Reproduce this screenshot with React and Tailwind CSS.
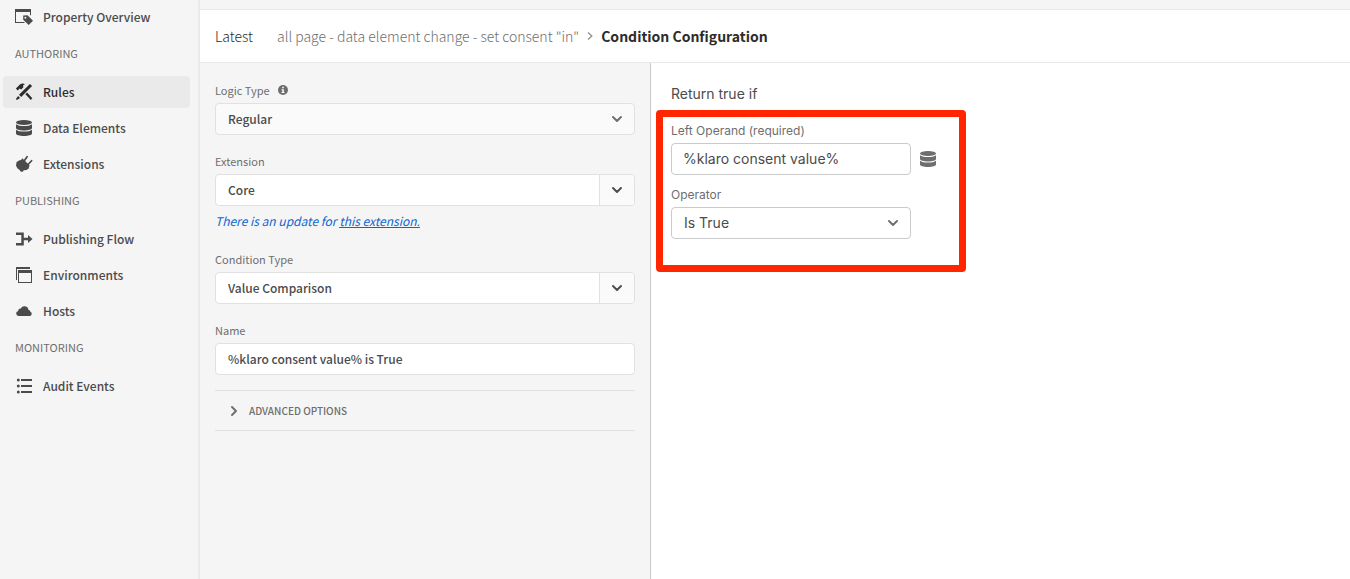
import { useState } from "react";

const iconClass = "size-[18px] shrink-0";

function PropertyIcon() {
  return (
    <svg className={iconClass} viewBox="0 0 18 18" fill="currentColor" aria-hidden="true">
      <path d="M0 1h16v6.500l-1-.5V4H1v10h8l1 1H0z" />
      <path d="M8.200 7.500l4.300-.3L18 12.700 13.700 17 8.200 11.800z" />
      <circle cx="10.400" cy="9.700" r="1" fill="#f5f5f5" />
    </svg>
  );
}

function RulesIcon() {
  return (
    <svg className={iconClass} viewBox="0 0 18 18" fill="currentColor" aria-hidden="true">
      <path d="M.9 5.400L5.200 1.200C7 .2 9 .5 9.900 1.200L8 2.600l.4 1.700-2.200 2.200-1.500-1-2 2z" />
      <path d="M10.400 11.200l1.700-1.700 5.200 5.800-1.500 1.600z" />
      <path d="M14.900.9l2.200 2.200L6.200 14 4 11.800z" />
      <path d="M3.100 12.900l2 2-3.200 2.100-1-1z" />
    </svg>
  );
}

function DataIcon() {
  return (
    <svg className={iconClass} viewBox="0 0 18 18" fill="currentColor" aria-hidden="true">
      <ellipse cx="9" cy="3.500" rx="8" ry="2.500" />
      <path d="M1 5.200c1.600 1.300 4.600 1.900 8 1.900s6.400-.6 8-1.900v3.700c0 1.400-3.600 2.500-8 2.500s-8-1.100-8-2.500z" />
      <path d="M1 10.700c1.600 1.300 4.600 1.900 8 1.900s6.400-.6 8-1.900v3.700c0 1.400-3.600 2.500-8 2.500s-8-1.100-8-2.500z" />
    </svg>
  );
}

function PlugIcon() {
  return (
    <svg className={iconClass} viewBox="0 0 18 18" fill="currentColor" aria-hidden="true">
      <path d="M7.300 3.200l7.200 7-.8 3.200-2.200 1.600-2.600.3-1.600 1.600-2-.6L4.700 15 2.300 13.200 1 10.400 1.600 7l3-1.800 1.500-.1z" />
      <path d="M9.300 5.700l2.800-4M13.300 9.300l3.300-3.600" stroke="currentColor" strokeWidth="1.700" strokeLinecap="round" />
    </svg>
  );
}

function FlowIcon() {
  return (
    <svg className={iconClass} viewBox="0 0 18 18" fill="currentColor" aria-hidden="true">
      <path d="M1 2.500h7.800v5.300H13V5l4.500 4L13 13v-2.800H8.800v5.300H1V13h5.300V5H1z" />
    </svg>
  );
}

function EnvironmentIcon() {
  return (
    <svg className={iconClass} viewBox="0 0 18 18" fill="currentColor" aria-hidden="true">
      <path d="M1 1h14v2H2v11H1z" />
      <path d="M3 4h14v13H3zM4 7v9h12V7z" fillRule="evenodd" />
    </svg>
  );
}

function CloudIcon() {
  return (
    <svg className={iconClass} viewBox="0 0 18 18" fill="currentColor" aria-hidden="true">
      <path d="M3.500 14a2.600 2.600 0 0 1-.4-5.100A2.600 2.600 0 0 1 5.800 6.500a4 4 0 0 1 7.600 1.200 2.400 2.400 0 0 1 1.800 1.700A2.400 2.400 0 0 1 14.700 14z" />
    </svg>
  );
}

function ListIcon() {
  return (
    <svg className={iconClass} viewBox="0 0 18 18" fill="currentColor" aria-hidden="true">
      <circle cx="3.300" cy="3" r="1.500" />
      <circle cx="3.300" cy="9" r="1.500" />
      <circle cx="3.300" cy="15" r="1.500" />
      <path d="M6 2h11v2H6zM6 8h11v2H6zM6 14h11v2H6z" />
    </svg>
  );
}

function InfoIcon() {
  return (
    <svg className="size-[10px]" viewBox="0 0 10 10" aria-hidden="true">
      <circle cx="5" cy="5" r="5" fill="#6e6e6e" />
      <path d="M4.200 1.800h1.600v1.500H4.200zM3.600 4.200h2.200v2.800h.7v1H3.500V7h.8V5.200h-.7z" fill="#fff" />
    </svg>
  );
}

function Chevron({ className = "" }) {
  return (
    <svg className={`h-[6px] w-[10px] ${className}`} viewBox="0 0 10 6" fill="none" stroke="currentColor" strokeWidth="1.900" strokeLinecap="round" strokeLinejoin="round" aria-hidden="true">
      <path d="M1 1l4 4 4-4" />
    </svg>
  );
}

const groups = [
  { items: [["Property Overview", PropertyIcon]] },
  { title: "AUTHORING", items: [["Rules", RulesIcon], ["Data Elements", DataIcon], ["Extensions", PlugIcon]] },
  { title: "PUBLISHING", items: [["Publishing Flow", FlowIcon], ["Environments", EnvironmentIcon], ["Hosts", CloudIcon]] },
  { title: "MONITORING", items: [["Audit Events", ListIcon]] },
];

function Sidebar() {
  return (
    <nav className="w-[200px] shrink-0 border-r-2 border-[#eaeaea] pt-px pr-2 pl-[3px]">
      {groups.map(({ title, items }) => (
        <section key={items[0][0]}>
          {title && <h2 className="pb-[2px] pl-3 text-[11px] leading-[41px] text-[#6e6e6e]">{title}</h2>}
          <ul className="flex flex-col gap-1">
            {items.map(([label, Icon]) => (
              <li key={label}>
                <a
                  href="#"
                  className={`flex h-8 items-center gap-[10px] rounded pl-3 text-xs font-medium ${label === "Rules" ? "bg-[#eaeaea] text-[#2c2c2c]" : "text-[#4b4b4b]"}`}
                >
                  <Icon />
                  {label}
                </a>
              </li>
            ))}
          </ul>
        </section>
      ))}
    </nav>
  );
}

const labelClass = "flex h-6 items-center gap-2 pb-[2px] text-[11px] text-[#6e6e6e]";

function Combo({ id, label, initial }) {
  const [value, setValue] = useState(initial);
  return (
    <div>
      <label htmlFor={id} className={labelClass}>{label}</label>
      <div className="flex h-8 overflow-hidden rounded border border-[#e1e1e1] bg-white">
        <input id={id} value={value} onChange={(e) => setValue(e.target.value)} className="min-w-0 flex-1 px-3 text-xs font-medium text-[#4b4b4b] outline-none" />
        <button type="button" aria-label={`Show ${label} options`} className="flex w-[35px] items-center justify-center border-l border-[#e1e1e1] bg-[#fafafa]">
          <Chevron />
        </button>
      </div>
    </div>
  );
}

function ConditionForm() {
  return (
    <form className="w-[451px] shrink-0 border-r border-[#cacaca] pt-4 pr-[15px] pl-[15px]">
      <label htmlFor="logic" className={labelClass}>
        Logic Type <InfoIcon />
      </label>
      <div className="grid items-center">
        <select id="logic" className="col-start-1 row-start-1 h-8 w-full appearance-none rounded border border-[#e1e1e1] bg-[#fafafa] px-3 text-xs font-medium text-[#4b4b4b]">
          <option>Regular</option>
        </select>
        <Chevron className="pointer-events-none col-start-1 row-start-1 mr-[13px] justify-self-end text-[#6e6e6e]" />
      </div>
      <div className="mt-[15px]">
        <Combo id="extension" label="Extension" initial="Core" />
        <p className="h-[27px] pt-[2px] text-xs leading-[25px] text-[#0d66d0] italic">
          There is an update for <a href="#" className="underline">this extension.</a>
        </p>
      </div>
      <div className="mt-[15px]">
        <Combo id="condition" label="Condition Type" initial="Value Comparison" />
      </div>
      <div className="mt-[15px]">
        <label htmlFor="name" className={labelClass}>Name</label>
        <input id="name" defaultValue="%klaro consent value% is True" className="h-8 w-full rounded border border-[#e1e1e1] bg-white px-3 pb-[2px] text-xs font-medium text-[#4b4b4b]" />
      </div>
      <button type="button" className="mt-[15px] flex h-[41px] w-full items-center gap-[10px] border-y border-[#e1e1e1] pl-[14px] text-[10px] font-medium text-[#6e6e6e]">
        <Chevron className="-rotate-90" />
        ADVANCED OPTIONS
      </button>
    </form>
  );
}

const operandLabel = "flex h-6 items-center pb-px text-xs text-[#6e6e6e]";
const operandField = "h-8 w-60 rounded border border-[#cacaca] bg-white text-sm text-[#4b4b4b]";

function Comparison() {
  return (
    <section className="min-w-0 flex-1 bg-white pt-5 pl-[5px] font-[Inter,sans-serif]">
      <h2 className="mb-[5px] pl-[15px] text-sm leading-[22px] text-[#4b4b4b]">Return true if</h2>
      <div className="w-[310px] rounded-[4px] border-[7px] border-[#ff2600] px-2 pt-[2px] pb-[26px]">
        <label htmlFor="left" className={operandLabel}>Left Operand (required)</label>
        <div className="flex items-center gap-2">
          <input id="left" defaultValue="%klaro consent value%" className={`${operandField} px-[11px] pb-[2px]`} />
          <button type="button" aria-label="Choose data element" className="text-[#6e6e6e]">
            <DataIcon />
          </button>
        </div>
        <label htmlFor="operator" className={`${operandLabel} mt-2`}>Operator</label>
        <div className="grid w-60 items-center">
          <select id="operator" className={`${operandField} col-start-1 row-start-1 appearance-none px-3`}>
            <option>Is True</option>
          </select>
          <Chevron className="pointer-events-none col-start-1 row-start-1 mr-[13px] justify-self-end text-[#6e6e6e]" />
        </div>
      </div>
    </section>
  );
}

export default function App() {
  return (
    <div className="flex min-h-screen bg-[#f5f5f5] font-['Noto_Sans_CJK_SC','Noto_Sans',sans-serif] text-[#4b4b4b]">
      <Sidebar />
      <main className="flex min-w-0 flex-1 flex-col">
        <div className="h-[10px] border-b border-[#e8e8e8]" />
        <header className="flex h-[53px] items-center border-b border-[#e8e8e8] bg-white px-[15px] text-sm">
          <span className="mr-6 font-light text-[#2c2c2c]">Latest</span>
          <a href="#" className="font-light text-[#6e6e6e]">all page - data element change - set consent "in"</a>
          <svg className="mx-2 h-2 w-[6px]" viewBox="0 0 6 8" fill="none" stroke="#8e8e8e" strokeWidth="1.300" aria-hidden="true">
            <path d="M1 .5L4.800 4 1 7.500" />
          </svg>
          <h1 className="font-bold text-[#2c2c2c]">Condition Configuration</h1>
        </header>
        <div className="flex flex-1">
          <ConditionForm />
          <Comparison />
        </div>
      </main>
    </div>
  );
}
